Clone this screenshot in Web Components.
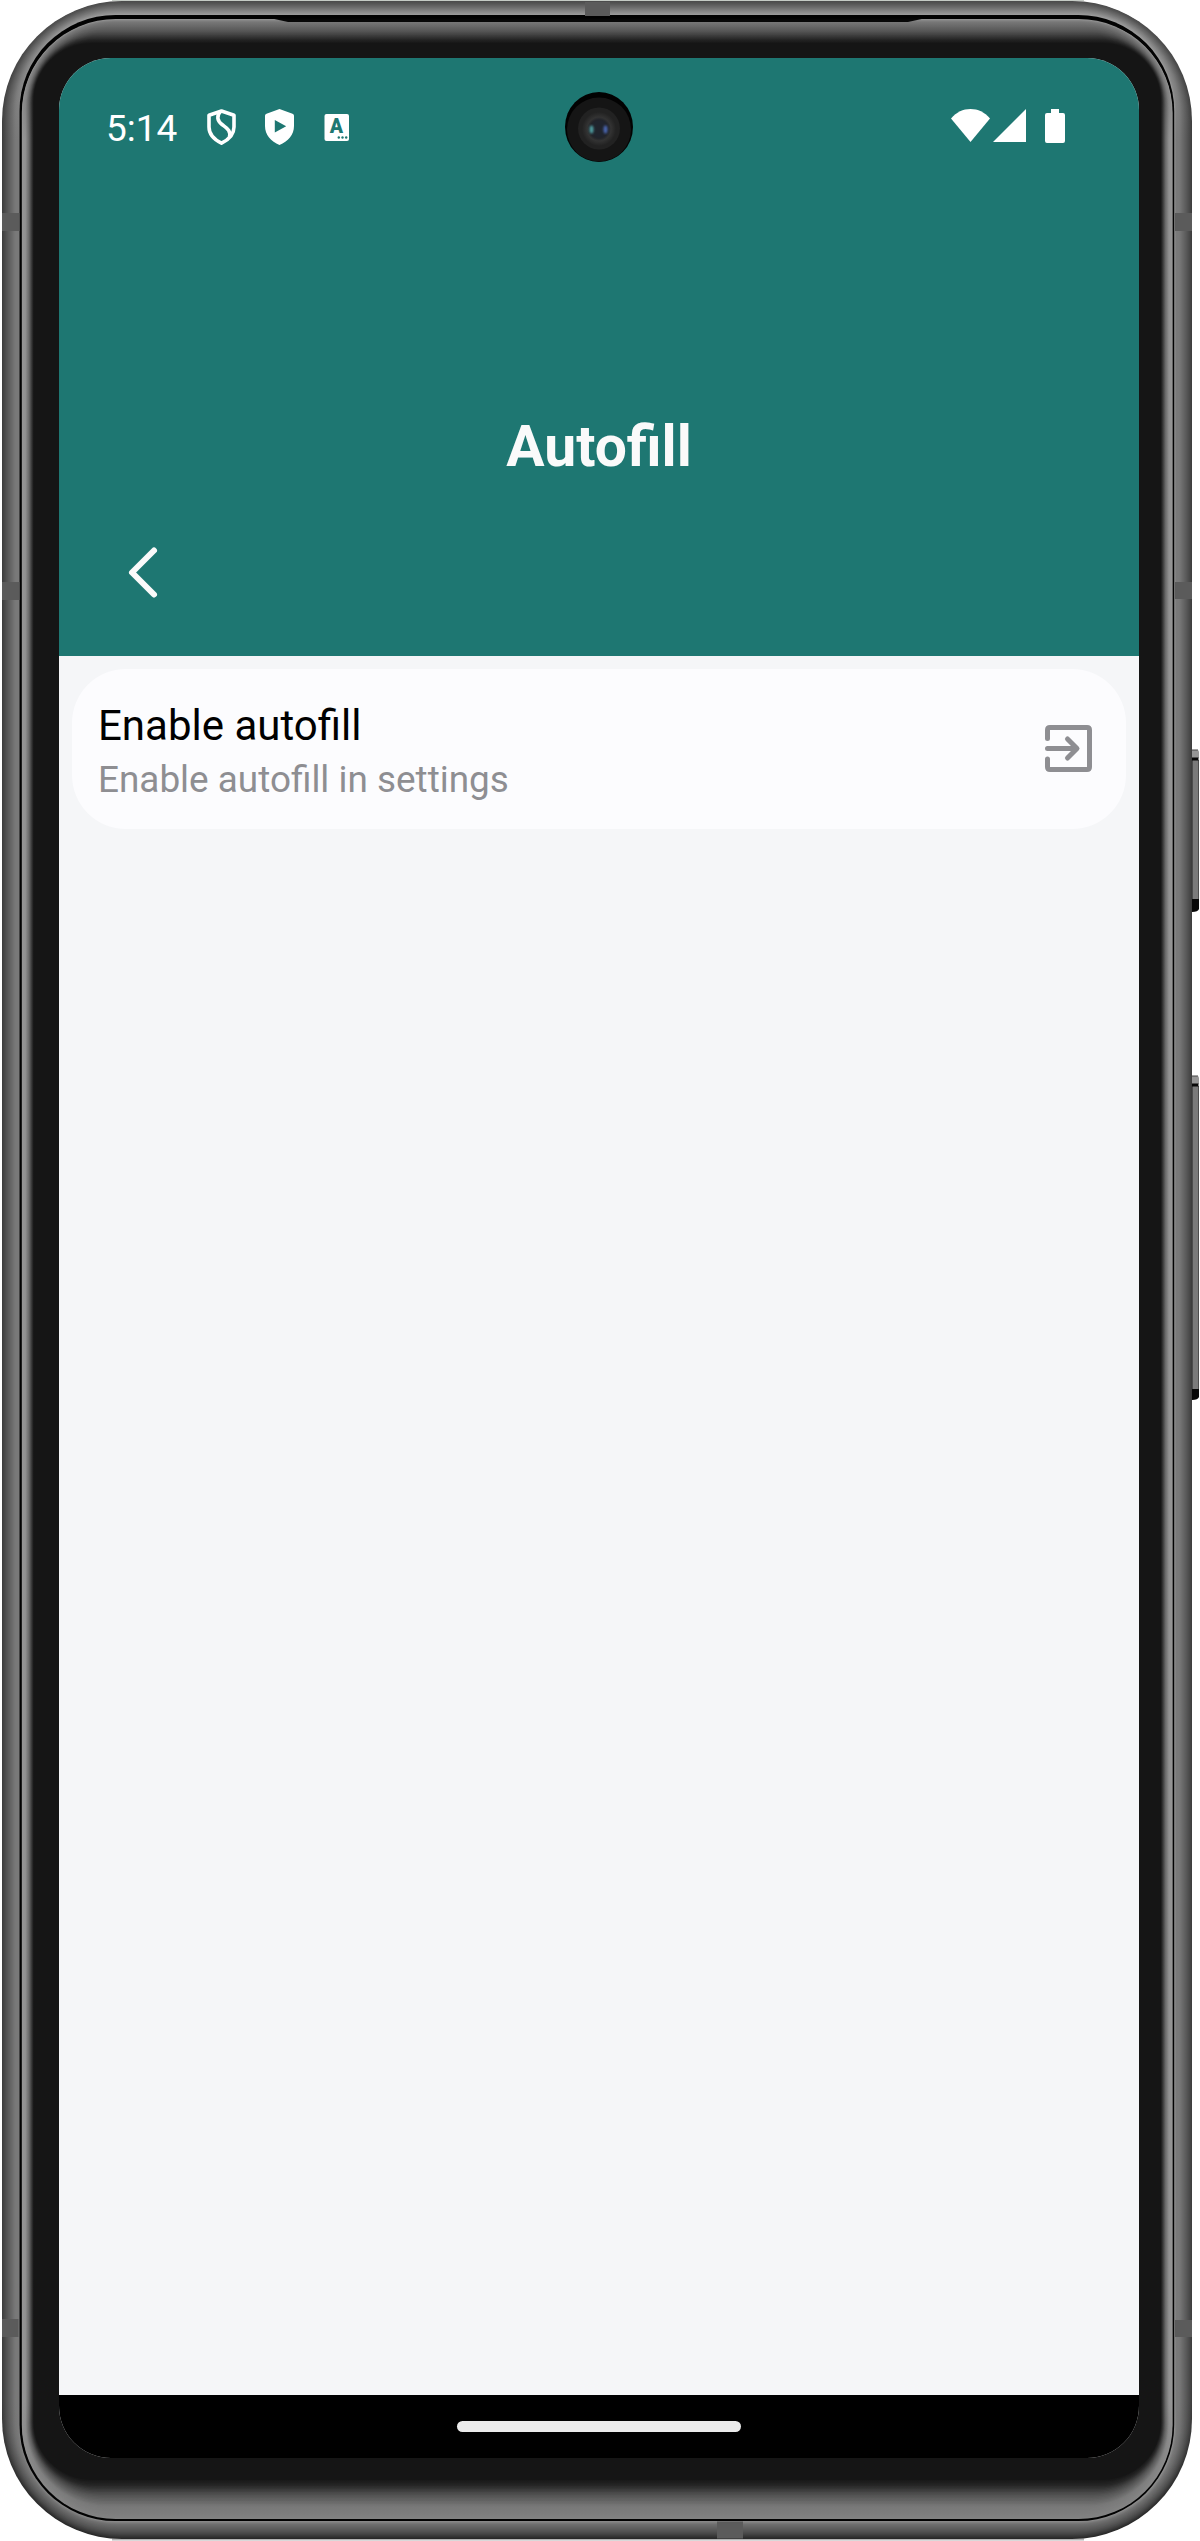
<!DOCTYPE html>
<html lang="en">
<head>
<meta charset="utf-8">
<title>Autofill</title>
<style>
body{margin:0;background:#fff;font-family:Roboto,sans-serif}
</style>
</head>
<body>
<phone-device>
  <status-bar slot="status" time="5:14"></status-bar>
  <app-header heading="Autofill"></app-header>
  <setting-list>
    <setting-row>
      <span slot="title">Enable autofill</span>
      <span slot="detail">Enable autofill in settings</span>
    </setting-row>
  </setting-list>
  <nav-handle></nav-handle>
</phone-device>
<script>
function define(name, html, setup) {
  customElements.define(name, class extends HTMLElement {
    constructor() {
      super();
      this.attachShadow({mode: 'open'}).innerHTML = html;
    }
    connectedCallback() { if (setup) setup(this, this.shadowRoot); }
  });
}

/* Metal body: concentric rounded rects, each shaded separately for top, sides and bottom. */
function mix(stops, t) {
  for (let i = 1; i < stops.length; i++) {
    const [a, va] = stops[i - 1], [b, vb] = stops[i];
    if (t <= b) return Math.round(va + (vb - va) * (t - a) / (b - a));
  }
  return stops[stops.length - 1][1];
}
let gid = 0;
function rings(from, to, n, top, side, bottom) {
  let s = '';
  for (let i = 0; i <= n; i++) {
    const t = i / n, b = from.map((v, k) => v + (to[k] - v) * t), id = 'g' + gid++;
    const g = v => `rgb(${v},${v},${v})`;
    s += `<linearGradient id="${id}" gradientUnits="userSpaceOnUse" x1="0" x2="0" y1="0" y2="2541">
      <stop offset=".008" stop-color="${g(mix(top, t))}"/><stop offset=".055" stop-color="${g(mix(side, t))}"/>
      <stop offset=".945" stop-color="${g(mix(side, t))}"/><stop offset=".99" stop-color="${g(mix(bottom, t))}"/></linearGradient>
      <rect x="${b[0]}" y="${b[1]}" width="${b[2] - b[0]}" height="${b[3] - b[1]}" rx="${b[4]}" fill="url(#${id})"/>`;
  }
  return s;
}
define('phone-frame', `<style>:host{display:block;width:1200px;height:2541px}svg{display:block}</style>
<svg width="1200" height="2541" viewBox="0 0 1200 2541"></svg>`, (el, root) => {
  let s = '<path d="M112 .5H1084" stroke="#c5cbc5"/><path d="M112 2539.5H1084" stroke="#b4b4b4" stroke-width="2"/>';
  s += rings([2,1,1192,2539,120], [20,15,1175,2521,96], 18,
    [[0,75],[.15,85],[.5,115],[1,160]], [[0,62],[.2,80],[.7,120],[.9,122],[1,142]], [[0,40],[.3,75],[.8,112],[1,145]]);
  s += '<rect x="19.5" y="15" width="1154.7" height="2506" rx="96" fill="#020202"/>';
  s += '<g fill="#5b5b5b"><path d="M2 213h17.5v18H2zM2 582h17.5v18H2zM2 2319h16.5v18H2zM1175 213h17v18h-17zM1175 582h17v17h-17zM1175 2320h17v17h-17zM585 2h25v14h-25zM717 2521.500h26v17h-26z"/></g>';
  s += rings([21.8,19,1172.6,2519,94], [33.5,43,1161,2480,58], 26,
    [[0,145],[.1,120],[.5,80],[.85,32],[1,21]], [[0,150],[.3,145],[.6,105],[.85,50],[1,21]], [[0,130],[.3,118],[.6,76],[.85,32],[1,21]]);
  s += '<path d="M272 18.500H924L908 22H288z" fill="#070707"/>';
  /* Side keys */
  s += [[750, 912, 13], [1076, 1400, 11]].map(([a, b, k]) =>
    `<path d="M1192 ${a}h5q2 0 2 2V${a + 8}h-7z" fill="#969696"/><path d="M1192 ${a}h6" stroke="#444"/>
     <path d="M1192 ${a + 10}h7V${b - k}h-7z" fill="#7b7b7b"/><path d="M1192.500 ${a + 10}V${b - k}M1198.500 ${a + 10}V${b - k}" stroke="#4d4d4d"/>
     <path d="M1192 ${a + 7.5}h6.500v3h-6.500zM1192 ${b - k}h7V${b - 3}q-1 3-7 3z" fill="#080808"/>`).join('');
  root.querySelector('svg').innerHTML = s;
});

define('front-camera', `<style>:host{display:block;width:68px;height:70px}svg{display:block}</style>
<svg width="68" height="70" viewBox="0 0 68 70">
<defs><radialGradient id="l"><stop offset="0" stop-color="#252b36"/><stop offset=".55" stop-color="#22242a"/><stop offset=".7" stop-color="#333"/><stop offset="1" stop-color="#222"/></radialGradient>
<filter id="b"><feGaussianBlur stdDeviation=".8"/></filter></defs>
<ellipse cx="34" cy="35" rx="34" ry="35" fill="#020202"/><circle cx="34" cy="37.500" r="32" fill="#151515"/>
<circle cx="34" cy="36.500" r="21" fill="#222"/><circle cx="34" cy="37" r="17" fill="url(#l)"/>
<circle cx="34" cy="37" r="8.500" fill="#20242d"/>
<g filter="url(#b)"><ellipse cx="26.500" cy="37.500" rx="2" ry="4" fill="#4f9da0"/><ellipse cx="40.500" cy="37.500" rx="2" ry="4" fill="#4c66b0"/></g></svg>`);

define('phone-device', `<style>
:host{display:grid;width:1200px;height:2541px;overflow:hidden}
phone-frame,.screen,front-camera{grid-area:1/1}
.screen{margin:58px 0 0 59px;width:1080px;height:2400px;border-radius:52px;overflow:hidden;display:flex;flex-direction:column;background:#f5f6f8}
.status{background:#1e7772}
front-camera{margin:92px 0 0 565px}
</style><phone-frame></phone-frame>
<div class="screen"><div class="status"><slot name="status"></slot></div><slot></slot></div>
<front-camera></front-camera>`);

define('status-bar', `<style>
:host{display:flex;align-items:center;height:138px;box-sizing:border-box;padding:0 74px 0 47px;color:#fff}
.time{font-size:37px;line-height:44px;width:71px;white-space:nowrap;padding-top:3px}
svg{display:block;flex:none}.left,.right{display:flex;align-items:center}
.left{gap:27px;margin-left:29px}.right{margin-left:auto;padding-bottom:2px}
</style><span class="time"></span>
<div class="left">
<svg width="31" height="38" viewBox="0 0 31 38"><g fill="none" stroke="#fff" stroke-width="3.600" stroke-linejoin="round"><path d="M15.500 3 28 7.300V19c0 7-5 12.500-12.500 16.200C8 31.500 3 26 3 19V7.300z"/><path d="M14.500 3.500C10 8 11.500 13 16 16.500S25 22 23.500 29"/></g></svg>
<svg width="31" height="38" viewBox="0 0 31 38"><path fill="#fff" fill-rule="evenodd" d="M15.500 1 28.500 5.700q1.500.6 1.500 2V18c0 9-6 15.500-14.500 19C7 33.500 1 27 1 18V7.700q0-1.400 1.500-2zM10.800 12v12.500L22.200 18.200z"/></svg>
<svg width="31" height="38" viewBox="0 0 31 38"><rect x="2.500" y="6" width="24.500" height="27" rx="2" fill="#fff"/><text x="14.500" y="25.300" text-anchor="middle" font-family="Roboto,sans-serif" font-weight="900" font-size="19.500" fill="#1e7772">A</text><g fill="#1e7772"><circle cx="16.800" cy="29.500" r="1.200"/><circle cx="20.500" cy="29.500" r="1.200"/><circle cx="24.200" cy="29.500" r="1.200"/></g></svg>
</div>
<div class="right">
<svg width="39" height="34" viewBox="0 0 39 34"><path fill="#fff" d="M0 9.500C5.500 3 12 0 19.500 0S33.500 3 39 9.500L19.500 33z"/></svg>
<svg style="margin-left:3px" width="33" height="34" viewBox="0 0 33 34"><path fill="#fff" d="M33 0v33H0z"/></svg>
<svg style="margin-left:19px" width="20" height="34" viewBox="0 0 20 34"><path fill="#fff" d="M6 0h8v4h4q2 0 2 2v26q0 2-2 2H2q-2 0-2-2V6q0-2 2-2h4z"/></svg>
</div>`, (el, root) => { root.querySelector('.time').textContent = el.getAttribute('time'); });

define('app-header', `<style>
:host{display:flex;flex-direction:column;height:460px;flex:none;box-sizing:border-box;padding-top:216px;background:#1e7772;color:#fafafa}
h1{margin:0;text-align:center;font-size:57px;line-height:70px;font-weight:700}
.bar{display:flex;align-items:center;padding:62px 0 0 66px}
svg{display:block}
</style><h1></h1><div class="bar"><svg width="36" height="56" viewBox="0 0 36 56"><path d="M29 6.500 7 28.500 29 50.500" fill="none" stroke="#fafafa" stroke-width="6" stroke-linecap="round" stroke-linejoin="round"/></svg></div>`,
(el, root) => { root.querySelector('h1').textContent = el.getAttribute('heading'); });

define('setting-list', `<style>:host{display:flex;flex-direction:column;flex:1;padding:13px;background:#f5f6f8}</style><slot></slot>`);

define('setting-row', `<style>
:host{display:flex;align-items:center;justify-content:space-between;height:160px;box-sizing:border-box;padding:4px 34px 0 26px;border-radius:54px;background:#fcfcfe}
.text{display:flex;flex-direction:column;gap:8px}
.title{font-size:42px;line-height:49px;color:#000}
.detail{font-size:36.900px;line-height:43px;color:#8e8e92}
svg{display:block;margin-top:-6px}
</style><div class="text"><div class="title"><slot name="title"></slot></div><div class="detail"><slot name="detail"></slot></div></div>
<svg width="47" height="47" viewBox="0 0 47 47"><g fill="none" stroke="#8e8e92" stroke-width="5" stroke-linecap="round" stroke-linejoin="round"><path d="M2.500 13.500V5q0-2.500 2.500-2.500H42q2.500 0 2.500 2.500V42q0 2.500-2.500 2.500H5q-2.500 0-2.500-2.500V34M2.500 23.500H31"/><path d="M22.500 14 32 23.500 22.500 33"/></g></svg>`);

define('nav-handle', `<style>
:host{display:flex;height:63px;flex:none;background:#000;justify-content:center;align-items:center}
i{display:block;width:284px;height:11px;border-radius:6px;background:#ebebeb}
</style><i></i>`);
</script>
</body>
</html>
